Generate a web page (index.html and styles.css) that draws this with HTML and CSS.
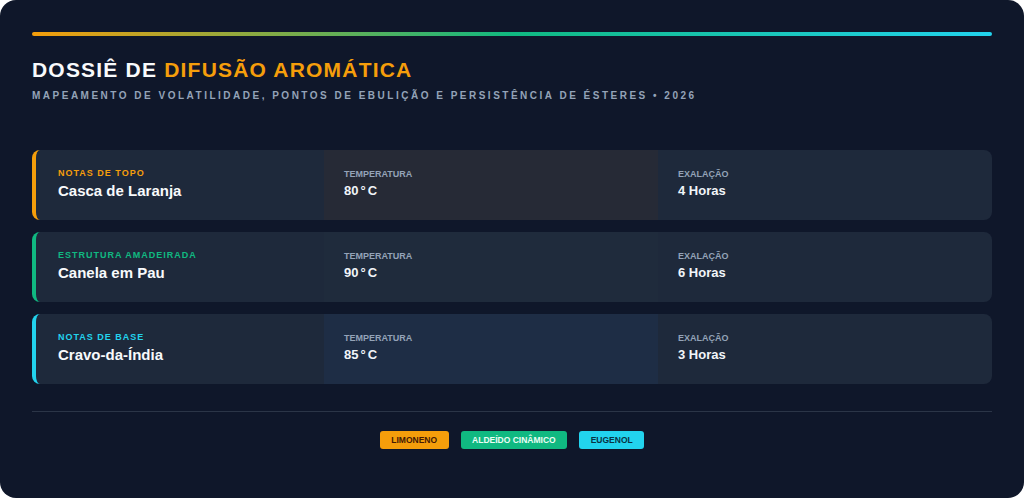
FILE: index.html
```html
<!DOCTYPE html>
<html lang="pt">
<head>
<meta charset="utf-8">
<title>Dossiê de Difusão Aromática</title>
<link rel="stylesheet" href="styles.css">
</head>
<body>
<main class="panel">
  <div class="accent-bar"></div>
  <header class="header">
    <h1 class="title">DOSSIÊ DE <span class="title-hl">DIFUSÃO AROMÁTICA</span></h1>
    <p class="subtitle">MAPEAMENTO DE VOLATILIDADE, PONTOS DE EBULIÇÃO E PERSISTÊNCIA DE ÉSTERES • 2026</p>
  </header>

  <section class="rows">
    <article class="row row-top">
      <div class="cell cell-name">
        <span class="tier">NOTAS DE TOPO</span>
        <span class="name">Casca de Laranja</span>
      </div>
      <div class="cell cell-temp">
        <span class="label">TEMPERATURA</span>
        <span class="value">80<span class="deg">°</span>C</span>
      </div>
      <div class="cell">
        <span class="label">EXALAÇÃO</span>
        <span class="value">4 Horas</span>
      </div>
    </article>

    <article class="row row-mid">
      <div class="cell cell-name">
        <span class="tier">ESTRUTURA AMADEIRADA</span>
        <span class="name">Canela em Pau</span>
      </div>
      <div class="cell cell-temp">
        <span class="label">TEMPERATURA</span>
        <span class="value">90<span class="deg">°</span>C</span>
      </div>
      <div class="cell">
        <span class="label">EXALAÇÃO</span>
        <span class="value">6 Horas</span>
      </div>
    </article>

    <article class="row row-base">
      <div class="cell cell-name">
        <span class="tier">NOTAS DE BASE</span>
        <span class="name">Cravo-da-Índia</span>
      </div>
      <div class="cell cell-temp">
        <span class="label">TEMPERATURA</span>
        <span class="value">85<span class="deg">°</span>C</span>
      </div>
      <div class="cell">
        <span class="label">EXALAÇÃO</span>
        <span class="value">3 Horas</span>
      </div>
    </article>
  </section>

  <footer class="footer">
    <span class="tag tag-amber">LIMONENO</span>
    <span class="tag tag-green">ALDEÍDO CINÂMICO</span>
    <span class="tag tag-cyan">EUGENOL</span>
  </footer>
</main>
</body>
</html>
```

FILE: styles.css
```css
* { box-sizing: border-box; }

html, body {
  margin: 0;
  padding: 0;
  background: #ffffff;
}

body {
  font-family: "Liberation Sans", Arial, sans-serif;
  color: #f8fafc;
}

.panel {
  width: 1024px;
  height: 498px;
  background: #0f172a;
  border-radius: 16px;
  padding: 32px 32px 0;
  overflow: hidden;
}

.accent-bar {
  height: 4px;
  border-radius: 2px;
  background: linear-gradient(90deg, #f59e0b 0%, #10b981 50%, #22d3ee 100%);
}

.header {
  padding-top: 22px;
}

.title {
  margin: 0;
  font-size: 21px;
  line-height: 24px;
  font-weight: 700;
  letter-spacing: 1.2px;
  color: #f8fafc;
}

.title-hl { color: #f59e0b; }

.subtitle {
  margin: 7px 0 0;
  font-size: 10px;
  line-height: 14px;
  font-weight: 700;
  letter-spacing: 2.5px;
  color: #94a3b8;
}

.rows {
  margin-top: 47px;
  display: flex;
  flex-direction: column;
  gap: 12px;
}

.row {
  display: grid;
  grid-template-columns: 288px 1fr 1fr;
  height: 70px;
  background: #1e293b;
  border-radius: 8px;
  border-left: 4px solid #f59e0b;
  overflow: hidden;
}

.row-mid { border-left-color: #10b981; }
.row-base { border-left-color: #22d3ee; }

.cell {
  display: flex;
  flex-direction: column;
  justify-content: center;
  gap: 2px;
  padding: 0 20px 3px;
}

.cell-name { padding-left: 22px; }

.row-top .cell-temp { background: #262a36; }
.row-mid .cell-temp { background: #1f2b3c; }
.row-base .cell-temp { background: #1e2d45; }

.tier {
  font-size: 9px;
  line-height: 12px;
  font-weight: 700;
  letter-spacing: 1px;
  color: #f59e0b;
}

.row-mid .tier { color: #10b981; }
.row-base .tier { color: #22d3ee; }

.name {
  font-size: 15px;
  line-height: 19px;
  font-weight: 700;
  color: #f8fafc;
}

.label {
  font-size: 9px;
  line-height: 12px;
  font-weight: 700;
  color: #94a3b8;
}

.value {
  font-size: 13px;
  line-height: 18px;
  font-weight: 700;
  color: #f1f5f9;
}

.deg { margin: 0 2px; }

.footer {
  margin-top: 27px;
  border-top: 1px solid #2b3547;
  padding-top: 19px;
  display: flex;
  justify-content: center;
  gap: 12px;
}

.tag {
  display: inline-flex;
  align-items: center;
  height: 18px;
  padding: 0 11.5px;
  border-radius: 3px;
  font-size: 8.5px;
  font-weight: 700;
}

.tag-amber { background: #f59e0b; color: #451a03; }
.tag-green { background: #10b981; color: #ecfdf5; }
.tag-cyan { background: #22d3ee; color: #083344; }
```
